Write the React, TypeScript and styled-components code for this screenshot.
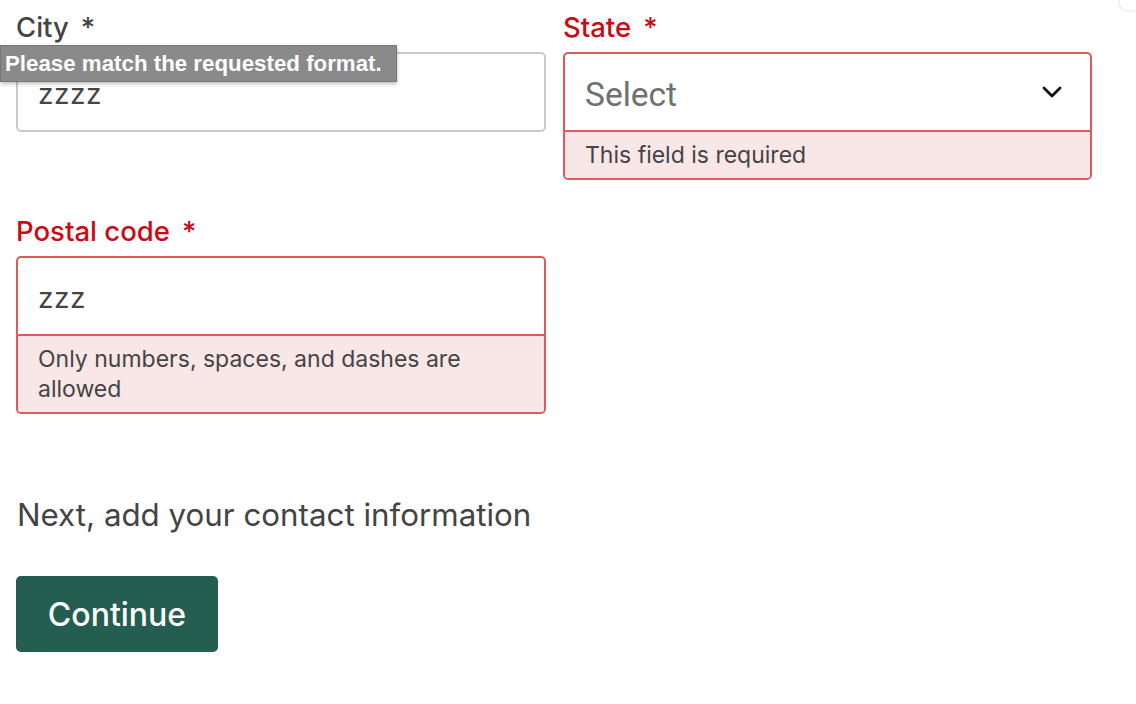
import React from "react";
import styled, { createGlobalStyle } from "styled-components";

const Global = createGlobalStyle`
  html, body { margin: 0; padding: 0; background: #fff; }
  body { font-family: Inter, "Noto Sans", sans-serif; color: #222; }
  * { box-sizing: border-box; }
`;

const Page = styled.div`
  position: relative;
  width: 1136px;
  height: 704px;
  overflow: hidden;
  padding: 10px 16px 0 16px;
`;

const Grid = styled.div`
  display: grid;
  grid-template-columns: 530px 529px;
  column-gap: 17px;
  row-gap: 34px;
  align-items: start;
`;

const Field = styled.div`
  position: relative;
  display: flex;
  flex-direction: column;
  gap: 8px;
`;

const Label = styled.div<{ $error?: boolean }>`
  font-size: 27.5px;
  line-height: 34px;
  font-weight: 500;
  color: ${(p) => (p.$error ? "#cc0a14" : "#444")};
  display: flex;
  gap: 12px;
`;

const Box = styled.div<{ $error?: boolean }>`
  border: 2px solid ${(p) => (p.$error ? "#de5a5c" : "#cacaca")};
  border-radius: 5px;
  overflow: hidden;
  background: #fff;
`;

const InputArea = styled.div`
  height: 76px;
  display: flex;
  align-items: center;
  justify-content: space-between;
  padding: 0 28px 0 20px;
`;

const Value = styled.span`
  font-size: 28px;
  color: #444;
  letter-spacing: 0.5px;
  padding-top: 4px;
`;

const Placeholder = styled.span`
  font-family: Roboto, "Liberation Sans", sans-serif;
  font-size: 33.5px;
  color: #707070;
  padding-top: 5px;
`;

const ErrorArea = styled.div`
  border-top: 2px solid #de5a5c;
  background: #f9e6e6;
  padding: 8px 20px;
  font-size: 23px;
  line-height: 30px;
  color: #444;
`;

const Tooltip = styled.div`
  position: absolute;
  left: -16px;
  top: 35px;
  width: 397px;
  height: 37px;
  background: #8a8a8a;
  border: 1px solid #777;
  box-shadow: 0 2px 4px rgba(0, 0, 0, 0.25);
  color: #fff;
  font-family: "Liberation Sans", Arial, sans-serif;
  font-weight: 700;
  font-size: 22.3px;
  line-height: 35px;
  padding-left: 4px;
  white-space: nowrap;
  z-index: 2;
`;

const Corner = styled.div`
  position: absolute;
  top: -10px;
  right: -12px;
  width: 28px;
  height: 20px;
  border-radius: 6px;
  background: #fff;
  box-shadow: 0 0 3px rgba(0, 0, 0, 0.2);
`;

const NextText = styled.p`
  margin: 81px 0 0 1px;
  font-size: 31.3px;
  line-height: 40px;
  color: #444;
`;

const Button = styled.button`
  margin-top: 41px;
  width: 202px;
  height: 76px;
  border: none;
  border-radius: 5px;
  background: #245e50;
  color: #fff;
  font-family: Inter, sans-serif;
  font-size: 32px;
  font-weight: 500;
  cursor: pointer;
`;

const Chevron = () => (
  <svg width="20" height="12" viewBox="0 0 20 12" fill="none">
    <path d="M2 2 L10 10 L18 2" stroke="#111" strokeWidth="2.8" strokeLinecap="round" strokeLinejoin="round" />
  </svg>
);

export default function App() {
  return (
    <>
      <Global />
      <Page>
        <Grid>
          <Field>
            <Label>
              <span>City</span>
              <span>*</span>
            </Label>
            <Box>
              <InputArea>
                <Value>zzzz</Value>
              </InputArea>
            </Box>
            <Tooltip>Please match the requested format.</Tooltip>
          </Field>
          <Field>
            <Label $error>
              <span>State</span>
              <span>*</span>
            </Label>
            <Box $error>
              <InputArea>
                <Placeholder>Select</Placeholder>
                <Chevron />
              </InputArea>
              <ErrorArea>This field is required</ErrorArea>
            </Box>
          </Field>
          <Field>
            <Label $error>
              <span>Postal code</span>
              <span>*</span>
            </Label>
            <Box $error>
              <InputArea>
                <Value>zzz</Value>
              </InputArea>
              <ErrorArea>Only numbers, spaces, and dashes are allowed</ErrorArea>
            </Box>
          </Field>
        </Grid>
        <NextText>Next, add your contact information</NextText>
        <Button>Continue</Button>
        <Corner />
      </Page>
    </>
  );
}
